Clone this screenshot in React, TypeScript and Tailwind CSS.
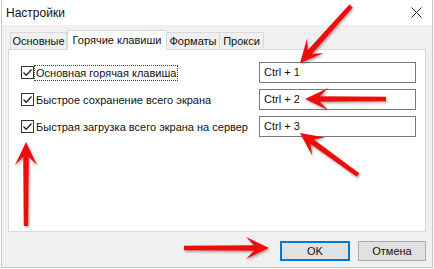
import React from "react";

const rows = [
  { label: "Основная горячая клавиша", key: "Ctrl + 1", focus: true },
  { label: "Быстрое сохранение всего экрана", key: "Ctrl + 2", focus: false },
  { label: "Быстрая загрузка всего экрана на сервер", key: "Ctrl + 3", focus: false },
];

const tabs = ["Основные", "Горячие клавиши", "Форматы", "Прокси"];

type Pt = [number, number];

// red annotation arrow: shaft + swept-back head
function arrowPoints(tail: Pt, tip: Pt, len = 23, half = 11, notch = 8, shaft = 2.8) {
  const dx = tip[0] - tail[0];
  const dy = tip[1] - tail[1];
  const d = Math.hypot(dx, dy);
  const ux = dx / d;
  const uy = dy / d;
  const nx = -uy;
  const ny = ux;
  const at = (along: number, side: number): string =>
    `${(tip[0] - ux * along + nx * side).toFixed(1)},${(tip[1] - uy * along + ny * side).toFixed(1)}`;
  return [
    at(0, 0),
    at(len, half),
    at(len - notch, shaft),
    at(d, shaft * 0.8),
    at(d, -shaft * 0.8),
    at(len - notch, -shaft),
    at(len, -half),
  ].join(" ");
}

const arrows: { tail: Pt; tip: Pt }[] = [
  { tail: [351, 6], tip: [300, 63] },
  { tail: [386, 99], tip: [305, 99] },
  { tail: [358, 175], tip: [300, 133] },
  { tail: [26, 226], tip: [26, 142] },
  { tail: [184, 248], tip: [269, 248] },
];

function Checkbox() {
  return (
    <span className="flex h-[13px] w-[13px] shrink-0 items-center justify-center border border-[#333] bg-white">
      <svg width="11" height="11" viewBox="0 0 11 11">
        <path d="M1.5 5.5 L4.2 8.2 L9.5 2.5" fill="none" stroke="#222" strokeWidth="1.3" />
      </svg>
    </span>
  );
}

export default function App() {
  return (
    <div
      className="relative h-[269px] w-[434px] overflow-hidden bg-white text-[11px] text-[#111]"
      style={{ fontFamily: '"Liberation Sans", Arial, sans-serif' }}
    >
      <div className="ml-[1px] mr-[1px] flex h-[268px] flex-col border-x border-b border-[#c8c8c8]">
        {/* Title bar */}
        <div className="flex h-[25px] items-center justify-between bg-white pl-[4px] pr-[10px]">
          <span className="text-[12px] leading-none">Настройки</span>
          <svg width="11" height="11" viewBox="0 0 11 11">
            <path d="M0.5 0.5 L10.5 10.5 M10.5 0.5 L0.5 10.5" stroke="#222" strokeWidth="1" />
          </svg>
        </div>

        {/* Body */}
        <div className="flex flex-1 flex-col bg-[#f0f0f0] px-[6px] pt-[6px]">
          <div className="flex h-[18px] items-end pl-[2px]">
            {tabs.map((t, i) =>
              i === 1 ? (
                <div
                  key={t}
                  className="relative z-10 -mb-[1px] flex h-[20px] w-[100px] items-center justify-center border border-b-0 border-[#d9d9d9] bg-white leading-none"
                >
                  {t}
                </div>
              ) : (
                <div
                  key={t}
                  className={`flex h-[17px] items-center justify-center border border-b-0 border-[#d9d9d9] bg-[#f0f0f0] leading-none ${
                    i === 0 ? "w-[57px]" : i === 2 ? "-ml-[1px] w-[54px]" : "-ml-[1px] w-[45px]"
                  }`}
                >
                  {t}
                </div>
              )
            )}
          </div>

          {/* Panel */}
          <div className="flex h-[183px] flex-col gap-[6px] border border-[#d9d9d9] bg-white pl-[12px] pr-[9px] pt-[12px]">
            {rows.map((r) => (
              <div key={r.key} className="flex h-[21px] items-center justify-between">
                <div className="flex items-center gap-[1px] whitespace-nowrap">
                  <Checkbox />
                  <span
                    className={`px-[1px] leading-[14px] ${
                      r.focus ? "outline outline-1 outline-dotted outline-[#444]" : ""
                    }`}
                  >
                    {r.label}
                  </span>
                </div>
                <div className="flex h-[21px] w-[157px] shrink-0 items-center border border-[#7a7a7a] bg-white px-[4px]">
                  {r.key}
                </div>
              </div>
            ))}
          </div>

          {/* Buttons */}
          <div className="flex justify-end gap-[8px] pt-[9px]">
            <button className="flex h-[20px] w-[70px] items-center justify-center border border-[#0078d7] bg-[#e1e1e1] text-[11px] leading-none shadow-[inset_0_0_0_1px_#0078d7]">
              OK
            </button>
            <button className="flex h-[20px] w-[68px] items-center justify-center border border-[#adadad] bg-[#e1e1e1] text-[11px] leading-none">
              Отмена
            </button>
          </div>
        </div>
      </div>

      {/* Annotation arrows */}
      <svg className="pointer-events-none absolute left-0 top-0" width="434" height="269">
        <defs>
          <filter id="sh" x="-20%" y="-20%" width="140%" height="140%">
            <feDropShadow dx="1" dy="1.5" stdDeviation="1.2" floodColor="#000" floodOpacity="0.35" />
          </filter>
        </defs>
        {arrows.map((a, i) => (
          <polygon key={i} points={arrowPoints(a.tail, a.tip)} fill="#ee1111" filter="url(#sh)" />
        ))}
      </svg>
    </div>
  );
}
